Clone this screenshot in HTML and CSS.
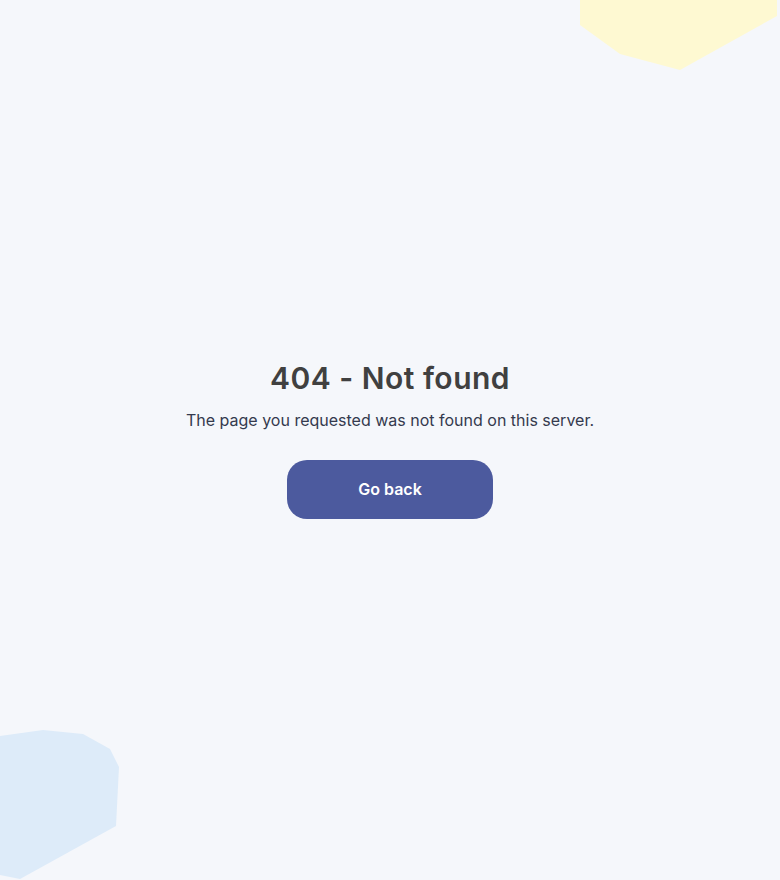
FILE: index.html
```html
<!DOCTYPE html>
<html lang="en">
<head>
<meta charset="utf-8">
<title>404 - Not found</title>
<link rel="stylesheet" href="styles.css">
</head>
<body>
<svg class="blob blob-top" width="200" height="72" viewBox="0 0 200 72" aria-hidden="true">
  <polygon points="0,0 0,25 40,54 100,70 197,16 197,0" fill="#fef9d2"/>
</svg>
<svg class="blob blob-bottom" width="122" height="152" viewBox="0 0 122 152" aria-hidden="true">
  <polygon points="0,8 43,2 83,6 110,21 119,39 116,98 20,151 0,147" fill="#ddebf9"/>
</svg>
<main class="content">
  <h1 class="title">404 - Not found</h1>
  <p class="message">The page you requested was not found on this server.</p>
  <a class="btn" href="#">Go back</a>
</main>
</body>
</html>
```

FILE: styles.css
```css
html, body {
  margin: 0;
  padding: 0;
  height: 100%;
}
body {
  background: #f5f7fb;
  font-family: Inter, "Noto Sans", sans-serif;
  overflow: hidden;
  position: relative;
}
.blob {
  position: absolute;
  display: block;
}
.blob-top {
  top: 0;
  left: 580px;
}
.blob-bottom {
  left: 0;
  top: 728px;
}
.content {
  position: relative;
  height: 100%;
  display: flex;
  flex-direction: column;
  align-items: center;
  justify-content: center;
}
.title {
  margin: 0;
  font-size: 30px;
  line-height: 36px;
  font-weight: 600;
  color: #404040;
  letter-spacing: 0.5px;
}
.message {
  margin: 12px 0 0;
  font-size: 16px;
  line-height: 24px;
  color: #343a4e;
}
.btn {
  margin: 28px 0 2px;
  width: 206px;
  height: 59px;
  display: flex;
  align-items: center;
  justify-content: center;
  background: #4c5a9e;
  color: #ffffff;
  border-radius: 20px;
  text-decoration: none;
  font-size: 16px;
  font-weight: 600;
}
```
